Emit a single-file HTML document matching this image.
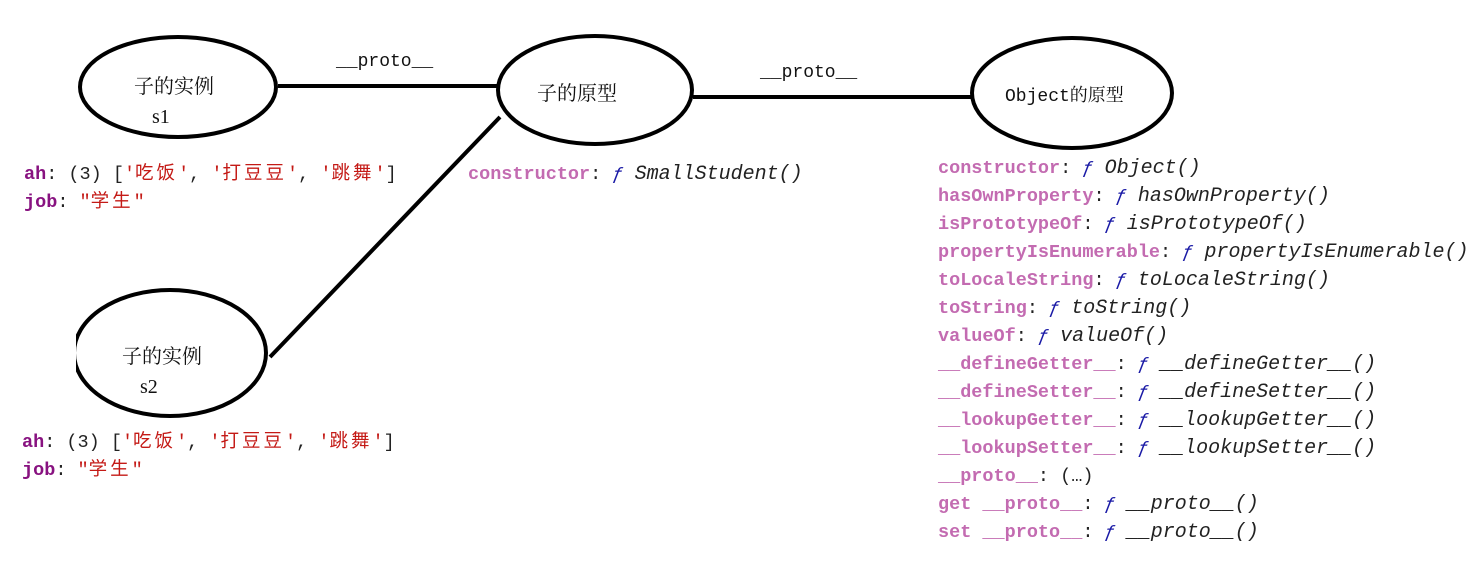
<!DOCTYPE html>
<html><head><meta charset="utf-8"><style>
body{margin:0;width:1470px;height:561px;background:#fff;position:relative;overflow:hidden}
.m{position:absolute;font-family:"Liberation Mono","Noto Sans CJK SC",monospace;font-size:18.5px;line-height:28px;white-space:pre;color:#222}
.k{color:#c36bb1;font-weight:bold}
.kd{color:#881280;font-weight:bold}
.s{color:#c41a16}
.c{letter-spacing:3px}
.f{color:#1a1aa6;font-style:italic}
.i{font-style:italic;color:#222;font-size:20px}
.l{position:absolute;font-family:"Liberation Serif","Noto Serif CJK SC",serif;font-size:20px;color:#111;white-space:pre}
</style></head><body>
<svg width="1470" height="561" style="position:absolute;left:0;top:0">
<g fill="none" stroke="#000" stroke-width="4">
<ellipse cx="178" cy="87" rx="98" ry="50"/>
<ellipse cx="595" cy="90" rx="97" ry="54"/>
<ellipse cx="1072" cy="93" rx="100" ry="55"/>
<ellipse cx="170" cy="353" rx="96" ry="63"/>
<line x1="278" y1="86" x2="497" y2="86"/>
<line x1="693" y1="97" x2="973" y2="97"/>
<line x1="500" y1="117" x2="270" y2="357"/>
</g>
<rect x="68" y="330" width="8" height="42" fill="#fff"/>
</svg>
<div class="l" style="left:134px;top:70px">子的实例</div>
<div class="l" style="left:152px;top:106px">s1</div>
<div class="l" style="left:122px;top:340px">子的实例</div>
<div class="l" style="left:140px;top:376px">s2</div>
<div class="l" style="left:537px;top:77px">子的原型</div>
<div class="l" style="left:1005px;top:81px;font-family:'Liberation Mono','Noto Serif CJK SC',monospace;font-size:18px">Object的原型</div>
<div class="l" style="left:336px;top:52px;font-family:'Liberation Mono',monospace;font-size:18px">__proto__</div>
<div class="l" style="left:760px;top:63px;font-family:'Liberation Mono',monospace;font-size:18px">__proto__</div>
<div class="m" style="left:24px;top:161px"><span class="kd">ah</span>: (3) [<span class="s">'<span class="c">吃饭</span>'</span>, <span class="s">'<span class="c">打豆豆</span>'</span>, <span class="s">'<span class="c">跳舞</span>'</span>]
<span class="kd">job</span>: <span class="s">"<span class="c">学生</span>"</span></div>
<div class="m" style="left:22px;top:429px"><span class="kd">ah</span>: (3) [<span class="s">'<span class="c">吃饭</span>'</span>, <span class="s">'<span class="c">打豆豆</span>'</span>, <span class="s">'<span class="c">跳舞</span>'</span>]
<span class="kd">job</span>: <span class="s">"<span class="c">学生</span>"</span></div>
<div class="m" style="left:468px;top:161px"><span class="k">constructor</span>: <span class="f">ƒ</span> <span class="i">SmallStudent()</span></div>
<div class="m" style="left:938px;top:155px"><span class="k">constructor</span>: <span class="f">ƒ</span> <span class="i">Object()</span>
<span class="k">hasOwnProperty</span>: <span class="f">ƒ</span> <span class="i">hasOwnProperty()</span>
<span class="k">isPrototypeOf</span>: <span class="f">ƒ</span> <span class="i">isPrototypeOf()</span>
<span class="k">propertyIsEnumerable</span>: <span class="f">ƒ</span> <span class="i">propertyIsEnumerable()</span>
<span class="k">toLocaleString</span>: <span class="f">ƒ</span> <span class="i">toLocaleString()</span>
<span class="k">toString</span>: <span class="f">ƒ</span> <span class="i">toString()</span>
<span class="k">valueOf</span>: <span class="f">ƒ</span> <span class="i">valueOf()</span>
<span class="k">__defineGetter__</span>: <span class="f">ƒ</span> <span class="i">__defineGetter__()</span>
<span class="k">__defineSetter__</span>: <span class="f">ƒ</span> <span class="i">__defineSetter__()</span>
<span class="k">__lookupGetter__</span>: <span class="f">ƒ</span> <span class="i">__lookupGetter__()</span>
<span class="k">__lookupSetter__</span>: <span class="f">ƒ</span> <span class="i">__lookupSetter__()</span>
<span class="k">__proto__</span>: (…)
<span class="k">get __proto__</span>: <span class="f">ƒ</span> <span class="i">__proto__()</span>
<span class="k">set __proto__</span>: <span class="f">ƒ</span> <span class="i">__proto__()</span></div>
</body></html>
